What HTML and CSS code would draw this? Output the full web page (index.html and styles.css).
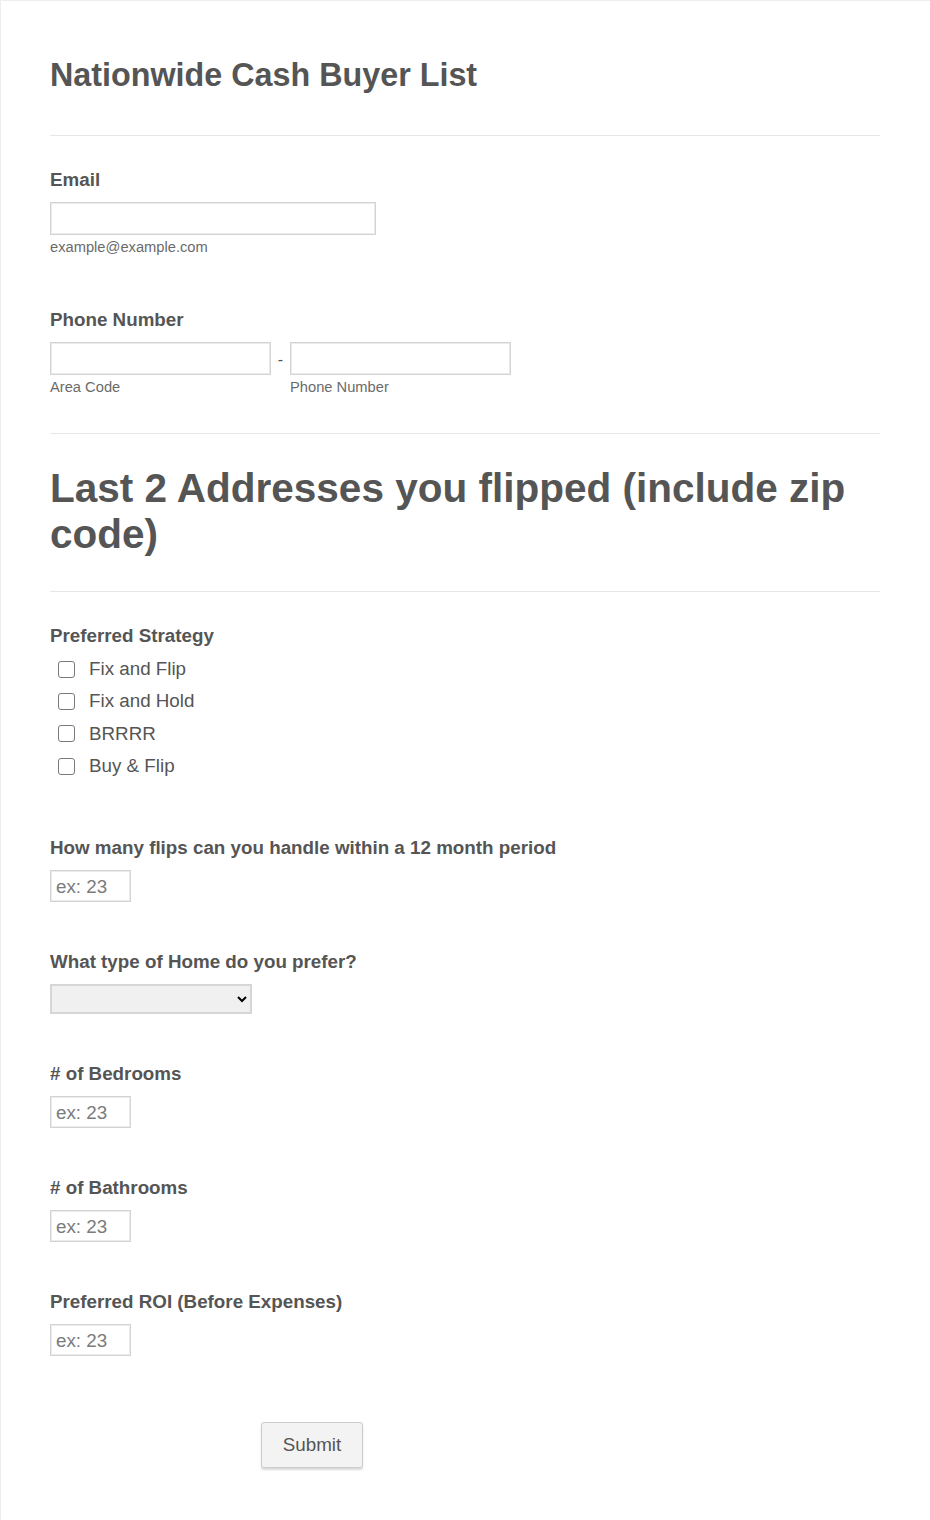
FILE: index.html
```html
<!DOCTYPE html>
<html lang="en">
<head>
<meta charset="utf-8">
<title>Nationwide Cash Buyer List</title>
<link rel="stylesheet" href="styles.css">
</head>
<body>
<div class="page">
  <header class="form-header">
    <h1 class="form-title">Nationwide Cash Buyer List</h1>
  </header>

  <div class="field field-email">
    <label class="field-label" for="email">Email</label>
    <input class="textbox textbox-email" id="email" type="email">
    <div class="sublabel">example@example.com</div>
  </div>

  <div class="field field-phone">
    <label class="field-label" for="area">Phone Number</label>
    <div class="phone-row">
      <div class="phone-part">
        <input class="textbox textbox-phone" id="area" type="tel">
        <div class="sublabel">Area Code</div>
      </div>
      <span class="phone-sep">-</span>
      <div class="phone-part">
        <input class="textbox textbox-phone" id="phone" type="tel">
        <div class="sublabel">Phone Number</div>
      </div>
    </div>
  </div>

  <div class="section-head">
    <h2 class="section-title">Last 2 Addresses you flipped (include zip code)</h2>
  </div>

  <div class="field field-strategy">
    <div class="field-label">Preferred Strategy</div>
    <div class="options">
      <label class="option"><input class="check" type="checkbox"><span>Fix and Flip</span></label>
      <label class="option"><input class="check" type="checkbox"><span>Fix and Hold</span></label>
      <label class="option"><input class="check" type="checkbox"><span>BRRRR</span></label>
      <label class="option"><input class="check" type="checkbox"><span>Buy &amp; Flip</span></label>
    </div>
  </div>

  <div class="field field-flips">
    <label class="field-label" for="flips">How many flips can you handle within a 12 month period</label>
    <input class="textbox textbox-num" id="flips" type="text" placeholder="ex: 23">
  </div>

  <div class="field field-next">
    <label class="field-label" for="home">What type of Home do you prefer?</label>
    <select class="dropdown" id="home"><option></option></select>
  </div>

  <div class="field field-next">
    <label class="field-label" for="beds"># of Bedrooms</label>
    <input class="textbox textbox-num" id="beds" type="text" placeholder="ex: 23">
  </div>

  <div class="field field-next">
    <label class="field-label" for="baths"># of Bathrooms</label>
    <input class="textbox textbox-num" id="baths" type="text" placeholder="ex: 23">
  </div>

  <div class="field field-next">
    <label class="field-label" for="roi">Preferred ROI (Before Expenses)</label>
    <input class="textbox textbox-num" id="roi" type="text" placeholder="ex: 23">
  </div>

  <div class="submit-row">
    <button class="submit-btn" type="submit">Submit</button>
  </div>
</div>
</body>
</html>
```

FILE: styles.css
```css
html, body {
  margin: 0;
  padding: 0;
  background: #ffffff;
}

body {
  font-family: "Liberation Sans", Arial, sans-serif;
  color: #555555;
}

.page {
  border-top: 1px solid #eeeeee;
  border-left: 1px solid #eeeeee;
  padding: 0 50px 60px 49px;
}

.form-header {
  padding-top: 55px;
  padding-bottom: 41px;
  border-bottom: 1px solid #e6e6e6;
}

.form-title {
  margin: 0;
  font-size: 32.3px;
  line-height: 38px;
  font-weight: bold;
  color: #555555;
}

.field {
  display: flex;
  flex-direction: column;
  align-items: flex-start;
}

.field-label {
  display: block;
  font-size: 18.8px;
  line-height: 22px;
  font-weight: bold;
  color: #555555;
  margin-bottom: 11px;
}

.field-email { margin-top: 33px; }
.field-phone { margin-top: 53px; }
.field-strategy { margin-top: 33px; }
.field-flips { margin-top: 55px; }
.field-next { margin-top: 49px; }

.textbox {
  box-sizing: border-box;
  margin: 0;
  border: 1px solid #d3d3d3;
  box-shadow: inset 0 0 0 1px #ececec;
  background: #ffffff;
  font-family: "Liberation Sans", Arial, sans-serif;
  font-size: 18.8px;
  color: #555555;
  padding: 1px 5px 0 5px;
  outline: none;
}

.textbox::placeholder {
  color: #7b7b7b;
}

.textbox-email {
  width: 326px;
  height: 33px;
}

.textbox-phone {
  width: 221px;
  height: 33px;
}

.textbox-num {
  width: 81px;
  height: 32px;
}

.sublabel {
  margin-top: 3px;
  font-size: 14.7px;
  line-height: 18px;
  color: #6b6b6b;
}

.phone-row {
  display: flex;
  align-items: flex-start;
}

.phone-part {
  display: flex;
  flex-direction: column;
}

.phone-sep {
  width: 19px;
  text-align: center;
  font-size: 16px;
  line-height: 35px;
  color: #555555;
}

.section-head {
  margin-top: 37px;
  border-top: 1px solid #e6e6e6;
  border-bottom: 1px solid #e6e6e6;
  padding-top: 31px;
  padding-bottom: 34px;
}

.section-title {
  margin: 0;
  font-size: 40.5px;
  line-height: 46px;
  font-weight: bold;
  color: #555555;
}

.field-strategy .field-label {
  margin-bottom: 6px;
}

.options {
  display: flex;
  flex-direction: column;
}

.option {
  display: flex;
  align-items: center;
  height: 32.3px;
  font-size: 18.8px;
  color: #555555;
}

.check {
  appearance: none;
  -webkit-appearance: none;
  box-sizing: border-box;
  width: 17px;
  height: 17px;
  margin: 0 14px 0 8px;
  border: 1.5px solid #7a7a7a;
  border-radius: 3px;
  background: #ffffff;
}

.dropdown {
  box-sizing: border-box;
  width: 202px;
  height: 30px;
  margin: 0;
  border: 2px solid #d6d6d6;
  border-radius: 0;
  background-color: #f0f0f0;
  color: #000000;
  font-family: "Liberation Sans", Arial, sans-serif;
  font-size: 18px;
}

.submit-row {
  margin-top: 66px;
  padding-left: 211px;
}

.submit-btn {
  box-sizing: border-box;
  width: 102px;
  height: 46px;
  margin: 0;
  border: 1px solid #cccccc;
  border-radius: 3px;
  background: #f3f3f3;
  box-shadow: 0 2px 2px rgba(0, 0, 0, 0.15);
  font-family: "Liberation Sans", Arial, sans-serif;
  font-size: 18.8px;
  color: #555555;
  padding: 0;
}
```
